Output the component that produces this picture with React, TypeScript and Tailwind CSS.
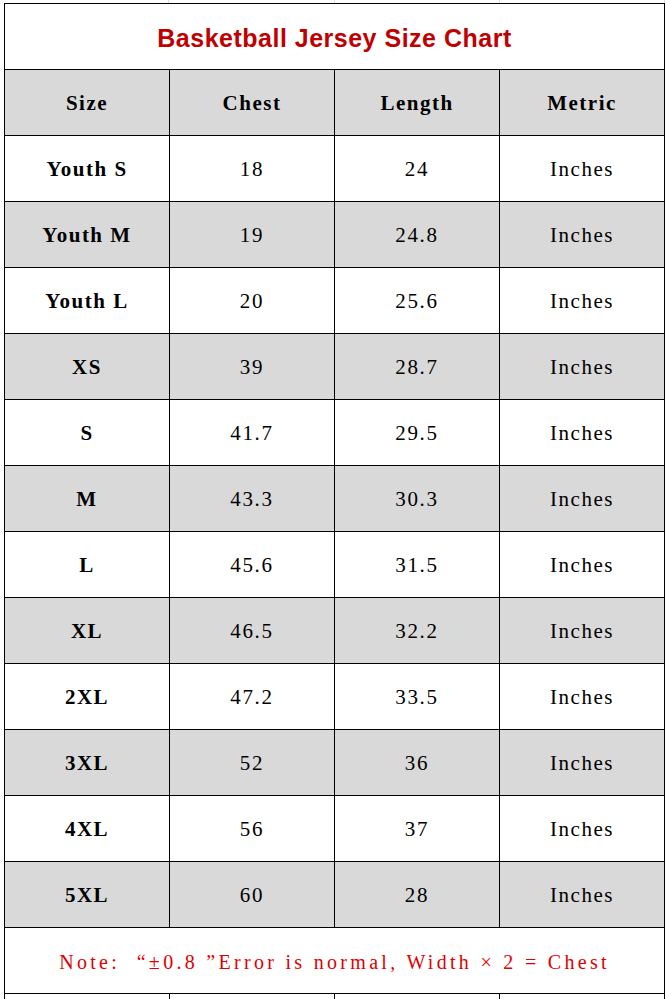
import React from "react";

const rows = [
  { size: "Youth S", chest: "18", length: "24" },
  { size: "Youth M", chest: "19", length: "24.8" },
  { size: "Youth L", chest: "20", length: "25.6" },
  { size: "XS", chest: "39", length: "28.7" },
  { size: "S", chest: "41.7", length: "29.5" },
  { size: "M", chest: "43.3", length: "30.3" },
  { size: "L", chest: "45.6", length: "31.5" },
  { size: "XL", chest: "46.5", length: "32.2" },
  { size: "2XL", chest: "47.2", length: "33.5" },
  { size: "3XL", chest: "52", length: "36" },
  { size: "4XL", chest: "56", length: "37" },
  { size: "5XL", chest: "60", length: "28" },
];

const serif = "font-['Liberation_Serif',_'Times_New_Roman',_serif]";
const cell = "h-[66px] flex items-center justify-center border-r border-b border-black";

const App: React.FC = () => {
  return (
    <div className="w-[665px] h-[999px] overflow-hidden bg-white">
      {/* faint sheet grid above the table */}
      <div className="ml-[4px] w-[661px] h-[3px] grid grid-cols-4">
        {[0, 1, 2, 3].map((i) => (
          <div key={i} className="border-r border-[#dcdcdc]" />
        ))}
      </div>

      <div className="ml-[4px] w-[661px] border-t border-l border-black">
        {/* Title */}
        <div className={`${cell} pt-[5px] font-['Liberation_Sans',_Arial,_sans-serif] font-bold text-[25px] tracking-[0.5px] text-[#c00000]`}>
          Basketball Jersey Size Chart
        </div>

        {/* Header */}
        <div className={`grid grid-cols-4 bg-[#d9d9d9] ${serif} font-bold text-[21px] tracking-[1.5px] text-black`}>
          {["Size", "Chest", "Length", "Metric"].map((h) => (
            <div key={h} className={`${cell} pt-[3px]`}>
              {h}
            </div>
          ))}
        </div>

        {/* Body */}
        {rows.map((row, index) => (
          <div
            key={row.size}
            className={`grid grid-cols-4 ${index % 2 === 1 ? "bg-[#d9d9d9]" : "bg-white"} ${serif} text-[21px] text-black`}
          >
            <div className={`${cell} pt-[3px] font-bold tracking-[1.5px]`}>{row.size}</div>
            <div className={`${cell} pt-[3px] tracking-[1.7px]`}>{row.chest}</div>
            <div className={`${cell} pt-[3px] tracking-[1.7px]`}>{row.length}</div>
            <div className={`${cell} pt-[3px] tracking-[1.5px]`}>Inches</div>
          </div>
        ))}

        {/* Note */}
        <div className={`${cell} pt-[2px] ${serif} text-[20px] tracking-[3.3px] text-[#e00000] whitespace-pre`}>
          {"Note:  “±0.8 ”Error is normal, Width × 2 = Chest"}
        </div>

        {/* empty row cut off at the bottom */}
        <div className="grid grid-cols-4">
          {[0, 1, 2, 3].map((i) => (
            <div key={i} className={cell} />
          ))}
        </div>
      </div>
    </div>
  );
};

export default App;
